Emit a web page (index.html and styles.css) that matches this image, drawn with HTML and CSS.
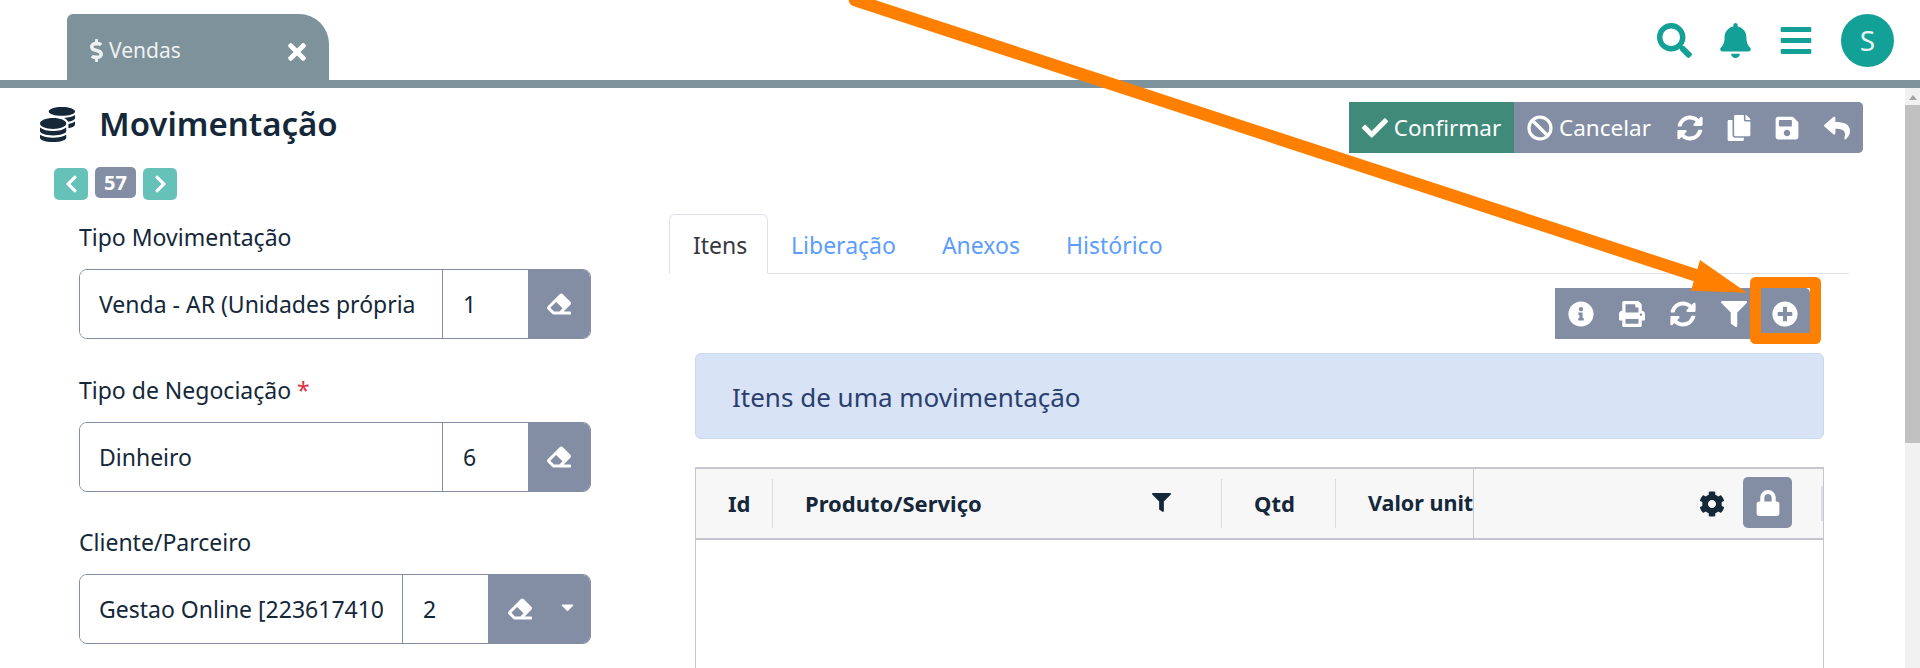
FILE: index.html
```html
<!DOCTYPE html>
<html lang="pt-BR">

<head>
  <meta charset="UTF-8">
  <meta name="viewport" content="width=device-width, initial-scale=1.0">
  <title>Movimentação</title>
  <link rel="stylesheet" href="styles.css">
</head>

<body>
  <svg class="sprite" aria-hidden="true">
    <symbol id="i-search" viewBox="0 0 512 512"><path d="M505 442.7L405.3 343c-4.5-4.5-10.6-7-17-7H372c27.6-35.3 44-79.7 44-128C416 93.1 322.9 0 208 0S0 93.1 0 208s93.1 208 208 208c48.3 0 92.7-16.4 128-44v16.3c0 6.4 2.5 12.5 7 17l99.7 99.7c9.4 9.4 24.6 9.4 33.9 0l28.3-28.3c9.4-9.4 9.4-24.6.1-34zM208 336c-70.7 0-128-57.2-128-128 0-70.7 57.2-128 128-128 70.7 0 128 57.2 128 128 0 70.7-57.2 128-128 128z"/></symbol>
    <symbol id="i-bell" viewBox="0 0 448 512"><path d="M224 512c35.32 0 63.97-28.65 63.97-64H160.03c0 35.35 28.65 64 63.97 64zm215.39-149.71c-19.32-20.76-55.47-51.99-55.47-154.29 0-77.7-54.48-139.9-127.94-155.16V32c0-17.67-14.32-32-31.98-32s-31.98 14.33-31.98 32v20.84C118.56 68.1 64.08 130.3 64.08 208c0 102.3-36.15 133.53-55.47 154.29-6 6.45-8.66 14.16-8.61 21.71.11 16.4 12.98 32 32.1 32h383.8c19.12 0 32-15.6 32.1-32 .05-7.55-2.61-15.27-8.61-21.71z"/></symbol>
    <symbol id="i-bars" viewBox="0 0 448 512"><path d="M16 132h416c8.837 0 16-7.163 16-16V76c0-8.837-7.163-16-16-16H16C7.163 60 0 67.163 0 76v40c0 8.837 7.163 16 16 16zm0 160h416c8.837 0 16-7.163 16-16v-40c0-8.837-7.163-16-16-16H16c-8.837 0-16 7.163-16 16v40c0 8.837 7.163 16 16 16zm0 160h416c8.837 0 16-7.163 16-16v-40c0-8.837-7.163-16-16-16H16c-8.837 0-16 7.163-16 16v40c0 8.837 7.163 16 16 16z"/></symbol>
    <symbol id="i-check" viewBox="0 0 512 512"><path d="M173.898 439.404l-166.4-166.4c-9.997-9.997-9.997-26.206 0-36.204l36.203-36.204c9.997-9.998 26.207-9.998 36.204 0L192 312.69 432.095 72.596c9.997-9.997 26.207-9.997 36.204 0l36.203 36.204c9.997 9.997 9.997 26.206 0 36.204l-294.4 294.401c-9.998 9.997-26.207 9.997-36.204-.001z"/></symbol>
    <symbol id="i-ban" viewBox="0 0 512 512"><path d="M256 8C119.034 8 8 119.033 8 256s111.034 248 248 248 248-111.034 248-248S392.967 8 256 8zm130.108 117.892c65.448 65.448 70 165.481 20.677 235.637L150.47 105.216c70.204-49.356 170.226-44.735 235.638 20.676zM125.892 386.108c-65.448-65.448-70-165.481-20.677-235.637L361.53 406.784c-70.203 49.356-170.226 44.736-235.638-20.676z"/></symbol>
    <symbol id="i-sync" viewBox="0 0 512 512"><path d="M370.72 133.28C339.458 104.008 298.888 87.962 255.848 88c-77.458.068-144.328 53.178-162.791 126.85-1.344 5.363-6.122 9.15-11.651 9.15H24.103c-7.498 0-13.194-6.807-11.807-14.176C33.933 94.924 134.813 8 256 8c66.448 0 126.791 26.136 171.315 68.685L463.03 40.97C478.149 25.851 504 36.559 504 57.941V192c0 13.255-10.745 24-24 24H345.941c-21.382 0-32.09-25.851-16.971-40.971l41.75-41.749zM32 296h134.059c21.382 0 32.09 25.851 16.971 40.971l-41.75 41.75c31.262 29.273 71.835 45.319 114.876 45.28 77.418-.07 144.315-53.144 162.787-126.849 1.344-5.363 6.122-9.15 11.651-9.15h57.304c7.498 0 13.194 6.807 11.807 14.176C478.067 417.076 377.187 504 256 504c-66.448 0-126.791-26.136-171.315-68.685L48.97 471.03C33.851 486.149 8 475.441 8 454.059V320c0-13.255 10.745-24 24-24z"/></symbol>
    <symbol id="i-copy" viewBox="0 0 448 512"><path d="M320 448v40c0 13.255-10.745 24-24 24H24c-13.255 0-24-10.745-24-24V120c0-13.255 10.745-24 24-24h72v296c0 30.879 25.121 56 56 56h168zm0-344V0H152c-13.255 0-24 10.745-24 24v368c0 13.255 10.745 24 24 24h272c13.255 0 24-10.745 24-24V128H344c-13.2 0-24-10.8-24-24zm120.971-31.029L375.029 7.029A24 24 0 0 0 358.059 0H352v96h96v-6.059a24 24 0 0 0-7.029-16.97z"/></symbol>
    <symbol id="i-save" viewBox="0 0 448 512"><path d="M433.941 129.941l-83.882-83.882A48 48 0 0 0 316.118 32H48C21.49 32 0 53.49 0 80v352c0 26.51 21.49 48 48 48h352c26.51 0 48-21.49 48-48V163.882a48 48 0 0 0-14.059-33.941zM224 416c-35.346 0-64-28.654-64-64 0-35.346 28.654-64 64-64s64 28.654 64 64c0 35.346-28.654 64-64 64zm96-304.52V212c0 6.627-5.373 12-12 12H76c-6.627 0-12-5.373-12-12V108c0-6.627 5.373-12 12-12h228.52c3.183 0 6.235 1.264 8.485 3.515l3.48 3.48A11.996 11.996 0 0 1 320 111.48z"/></symbol>
    <symbol id="i-reply" viewBox="0 0 512 512"><path d="M8.309 189.836L184.313 37.851C199.719 24.546 224 35.347 224 56.015v80.053c160.629 1.839 288 34.032 288 186.258 0 61.441-39.581 122.309-83.333 154.132-13.653 9.931-33.111-2.533-28.077-18.631 45.344-145.012-21.507-183.51-176.59-185.742V360c0 20.7-24.3 31.453-39.687 18.164l-176.004-152c-11.071-9.562-11.086-26.753 0-36.328z"/></symbol>
    <symbol id="i-info" viewBox="0 0 512 512"><path d="M256 8C119.043 8 8 119.083 8 256c0 136.997 111.043 248 248 248s248-111.003 248-248C504 119.083 392.957 8 256 8zm0 110c23.196 0 42 18.804 42 42s-18.804 42-42 42-42-18.804-42-42 18.804-42 42-42zm56 254c0 6.627-5.373 12-12 12h-88c-6.627 0-12-5.373-12-12v-24c0-6.627 5.373-12 12-12h12v-64h-12c-6.627 0-12-5.373-12-12v-24c0-6.627 5.373-12 12-12h64c6.627 0 12 5.373 12 12v100h12c6.627 0 12 5.373 12 12v24z"/></symbol>
    <symbol id="i-print" viewBox="0 0 512 512"><path d="M448 192V77.25c0-8.49-3.37-16.62-9.37-22.63L393.37 9.37c-6-6-14.14-9.37-22.63-9.37H96C78.33 0 64 14.33 64 32v160c-35.35 0-64 28.65-64 64v112c0 8.84 7.16 16 16 16h48v96c0 17.67 14.33 32 32 32h320c17.67 0 32-14.33 32-32v-96h48c8.84 0 16-7.16 16-16V256c0-35.35-28.65-64-64-64zm-64 256H128v-96h256v96zm0-224H128V64h192v48c0 8.84 7.16 16 16 16h48v96zm48 72c-13.25 0-24-10.75-24-24 0-13.26 10.75-24 24-24s24 10.74 24 24c0 13.25-10.75 24-24 24z"/></symbol>
    <symbol id="i-filter" viewBox="0 0 512 512"><path d="M487.976 0H24.028C2.71 0-8.047 25.866 7.058 40.971L192 225.941V432c0 7.831 3.821 15.17 10.237 19.662l80 55.98C298.02 518.69 320 507.493 320 487.98V225.941l184.947-184.97C520.021 25.896 509.338 0 487.976 0z"/></symbol>
    <symbol id="i-plus" viewBox="0 0 512 512"><path d="M256 8C119 8 8 119 8 256s111 248 248 248 248-111 248-248S393 8 256 8zm144 276c0 6.6-5.4 12-12 12h-92v92c0 6.6-5.4 12-12 12h-56c-6.6 0-12-5.4-12-12v-92h-92c-6.6 0-12-5.4-12-12v-56c0-6.6 5.4-12 12-12h92v-92c0-6.6 5.4-12 12-12h56c6.6 0 12 5.4 12 12v92h92c6.6 0 12 5.4 12 12v56z"/></symbol>
    <symbol id="i-cog" viewBox="0 0 512 512"><path d="M487.4 315.7l-42.6-24.6c4.3-23.2 4.3-47 0-70.2l42.6-24.6c4.9-2.8 7.1-8.6 5.5-14-11.1-35.6-30-67.8-54.7-94.6-3.8-4.1-10-5.1-14.8-2.3L380.8 110c-17.9-15.4-38.5-27.3-60.8-35.1V25.8c0-5.6-3.9-10.5-9.4-11.7-36.7-8.2-74.3-7.8-109.2 0-5.5 1.2-9.4 6.1-9.4 11.7V75c-22.2 7.9-42.8 19.8-60.8 35.1L88.7 85.5c-4.9-2.8-11-1.9-14.8 2.3-24.7 26.7-43.6 58.9-54.7 94.6-1.7 5.4.6 11.2 5.5 14L67.3 221c-4.3 23.2-4.3 47 0 70.2l-42.6 24.6c-4.9 2.8-7.1 8.6-5.5 14 11.1 35.6 30 67.8 54.7 94.6 3.8 4.1 10 5.1 14.8 2.3l42.6-24.6c17.9 15.4 38.5 27.3 60.8 35.1v49.2c0 5.6 3.9 10.5 9.4 11.7 36.7 8.2 74.3 7.8 109.2 0 5.5-1.2 9.4-6.1 9.4-11.7v-49.2c22.2-7.9 42.8-19.8 60.8-35.1l42.6 24.6c4.9 2.8 11 1.9 14.8-2.3 24.7-26.7 43.6-58.9 54.7-94.6 1.5-5.5-.7-11.3-5.6-14.1zM256 336c-44.1 0-80-35.9-80-80s35.9-80 80-80 80 35.9 80 80-35.9 80-80 80z"/></symbol>
    <symbol id="i-lock" viewBox="0 0 448 512"><path d="M400 224h-24v-72C376 68.2 307.8 0 224 0S72 68.2 72 152v72H48c-26.5 0-48 21.5-48 48v192c0 26.5 21.5 48 48 48h352c26.5 0 48-21.5 48-48V272c0-26.5-21.5-48-48-48zm-104 0H152v-72c0-39.7 32.3-72 72-72s72 32.3 72 72v72z"/></symbol>
    <symbol id="i-eraser" viewBox="0 0 512 512"><path d="M497.941 273.941c18.745-18.745 18.745-49.137 0-67.882l-160-160c-18.745-18.745-49.136-18.746-67.883 0l-256 256c-18.745 18.745-18.745 49.137 0 67.882l96 96A48.004 48.004 0 0 0 144 480h356c6.627 0 12-5.373 12-12v-40c0-6.627-5.373-12-12-12H355.883l142.058-142.059zm-302.627-62.627l137.373 137.373L265.373 416H150.628l-80-80 124.686-124.686z"/></symbol>
    <symbol id="i-times" viewBox="0 0 352 512"><path d="M242.72 256l100.07-100.07c12.28-12.28 12.28-32.19 0-44.48l-22.24-22.24c-12.28-12.28-32.19-12.28-44.48 0L176 189.28 75.93 89.21c-12.28-12.28-32.19-12.28-44.48 0L9.21 111.45c-12.28 12.28-12.28 32.19 0 44.48L109.28 256 9.21 356.07c-12.28 12.28-12.28 32.19 0 44.48l22.24 22.24c12.28 12.28 32.2 12.28 44.48 0L176 322.72l100.07 100.07c12.28 12.28 32.2 12.28 44.48 0l22.24-22.24c12.28-12.28 12.28-32.19 0-44.48L242.72 256z"/></symbol>
    <symbol id="i-dollar" viewBox="0 0 288 512"><path d="M209.2 233.4l-108-31.6C88.7 198.2 80 186.5 80 173.5c0-16.3 13.2-29.5 29.5-29.5h66.3c12.2 0 24.2 3.7 34.2 10.5 6.1 4.1 14.3 3.1 19.5-2l34.8-34c7.1-6.9 6.1-18.4-1.8-24.5C238 74.8 207.4 64.1 176 64V16c0-8.8-7.2-16-16-16h-32c-8.8 0-16 7.2-16 16v48h-2.5C45.8 64-5.4 118.7.5 183.6c4.2 46.1 39.4 83.6 83.8 96.6l102.5 30c12.5 3.7 21.2 15.3 21.2 28.3 0 16.3-13.2 29.5-29.5 29.5h-66.3C100 368 88 364.3 78 357.5c-6.1-4.1-14.3-3.1-19.5 2l-34.8 34c-7.1 6.9-6.1 18.4 1.8 24.5 24.5 19.2 55.1 29.9 86.5 30v48c0 8.8 7.2 16 16 16h32c8.8 0 16-7.2 16-16v-48.2c46.6-.9 90.3-28.6 105.7-72.7 21.5-61.6-14.6-124.8-72.5-141.7z"/></symbol>
    <symbol id="i-coins" viewBox="0 0 512 512"><path d="M0 405.3V448c0 35.3 86 64 192 64s192-28.7 192-64v-42.7C342.7 434.4 267.2 448 192 448S41.3 434.4 0 405.3zM320 128c106 0 192-28.7 192-64S426 0 320 0 128 28.7 128 64s86 64 192 64zM0 300.4V352c0 35.3 86 64 192 64s192-28.7 192-64v-51.6c-41.3 34-116.9 51.6-192 51.6S41.3 334.4 0 300.4zm416 11c57.3-11.1 96-31.7 96-55.4v-42.7c-23.2 16.4-57.3 27.6-96 34.5v63.6zM192 160C86 160 0 195.8 0 240s86 80 192 80 192-35.8 192-80-86-80-192-80zm219.3 56.3c60-10.8 100.7-32 100.7-56.3v-42.7c-35.5 25.1-96.5 38.6-160.7 41.8 29.5 14.3 51.2 33.5 60 57.2z"/></symbol>
    <symbol id="i-left" viewBox="0 0 320 512"><path d="M34.52 239.03L228.87 44.69c9.37-9.37 24.57-9.37 33.94 0l22.67 22.67c9.36 9.36 9.37 24.52.04 33.9L131.49 256l154.02 154.75c9.34 9.38 9.32 24.54-.04 33.9l-22.67 22.67c-9.37 9.37-24.57 9.37-33.94 0L34.52 272.97c-9.37-9.37-9.37-24.57 0-33.94z"/></symbol>
    <symbol id="i-right" viewBox="0 0 320 512"><path d="M285.476 272.971L91.132 467.314c-9.373 9.373-24.569 9.373-33.941 0l-22.667-22.667c-9.357-9.357-9.375-24.522-.04-33.901L188.505 256 34.484 101.255c-9.335-9.379-9.317-24.544.04-33.901l22.667-22.667c9.373-9.373 24.569-9.373 33.941 0L285.475 239.03c9.373 9.372 9.373 24.568.001 33.941z"/></symbol>
    <symbol id="i-caret" viewBox="0 0 320 512"><path d="M31.3 192h257.3c17.8 0 26.7 21.5 14.1 34.1L174.1 354.8c-7.8 7.8-20.5 7.8-28.3 0L17.2 226.1C4.6 213.5 13.5 192 31.3 192z"/></symbol>
  </svg>

  <header class="topbar">
    <div class="app-tab">
      <svg class="tab-dollar"><use href="#i-dollar"/></svg>
      <span class="tab-name">Vendas</span>
      <svg class="tab-close"><use href="#i-times"/></svg>
    </div>
    <div class="top-actions">
      <svg class="top-icon"><use href="#i-search"/></svg>
      <svg class="top-icon top-icon-bell"><use href="#i-bell"/></svg>
      <svg class="top-icon top-icon-bars"><use href="#i-bars"/></svg>
      <div class="avatar">S</div>
    </div>
  </header>

  <div class="page">
    <main class="content">
      <div class="title-row">
        <h1 class="page-title">
          <svg class="title-icon"><use href="#i-coins"/></svg>
          Movimentação
        </h1>
        <div class="toolbar">
          <button class="tool-btn tool-confirm"><svg class="tool-icon"><use href="#i-check"/></svg>Confirmar</button>
          <button class="tool-btn tool-text"><svg class="tool-icon"><use href="#i-ban"/></svg>Cancelar</button>
          <button class="tool-btn"><svg class="tool-icon"><use href="#i-sync"/></svg></button>
          <button class="tool-btn tool-narrow"><svg class="tool-icon"><use href="#i-copy"/></svg></button>
          <button class="tool-btn tool-narrow"><svg class="tool-icon"><use href="#i-save"/></svg></button>
          <button class="tool-btn tool-last"><svg class="tool-icon"><use href="#i-reply"/></svg></button>
        </div>
      </div>

      <div class="pager">
        <button class="pager-btn"><svg class="pager-icon"><use href="#i-left"/></svg></button>
        <span class="pager-count">57</span>
        <button class="pager-btn"><svg class="pager-icon"><use href="#i-right"/></svg></button>
      </div>

      <div class="columns">
        <form class="form-col">
          <div class="field">
            <label class="field-label">Tipo Movimentação</label>
            <div class="input-group">
              <input class="input-text" type="text" value="Venda - AR (Unidades própria">
              <input class="input-code" type="text" value="1">
              <span class="input-btn"><svg class="erase-icon"><use href="#i-eraser"/></svg></span>
            </div>
          </div>
          <div class="field">
            <label class="field-label">Tipo de Negociação <span class="required">*</span></label>
            <div class="input-group">
              <input class="input-text" type="text" value="Dinheiro">
              <input class="input-code" type="text" value="6">
              <span class="input-btn"><svg class="erase-icon"><use href="#i-eraser"/></svg></span>
            </div>
          </div>
          <div class="field">
            <label class="field-label">Cliente/Parceiro</label>
            <div class="input-group">
              <input class="input-text" type="text" value="Gestao Online [223617410">
              <input class="input-code" type="text" value="2">
              <span class="input-btn input-btn-wide">
                <svg class="erase-icon"><use href="#i-eraser"/></svg>
                <svg class="caret-icon"><use href="#i-caret"/></svg>
              </span>
            </div>
          </div>
        </form>

        <section class="detail-col">
          <nav class="tabs">
            <a class="tab tab-active">Itens</a>
            <a class="tab">Liberação</a>
            <a class="tab">Anexos</a>
            <a class="tab">Histórico</a>
          </nav>

          <div class="tab-body">
            <div class="item-tools">
              <button class="item-btn"><svg class="tool-icon"><use href="#i-info"/></svg></button>
              <button class="item-btn"><svg class="tool-icon"><use href="#i-print"/></svg></button>
              <button class="item-btn"><svg class="tool-icon"><use href="#i-sync"/></svg></button>
              <button class="item-btn"><svg class="tool-icon"><use href="#i-filter"/></svg></button>
              <button class="item-btn"><svg class="tool-icon"><use href="#i-plus"/></svg></button>
            </div>

            <div class="alert">Itens de uma movimentação</div>

            <div class="grid">
              <div class="grid-head">
                <div class="grid-cols">
                  <div class="grid-cell cell-id">Id</div>
                  <div class="grid-cell cell-product">Produto/Serviço<svg class="head-filter"><use href="#i-filter"/></svg></div>
                  <div class="grid-cell cell-qty">Qtd</div>
                  <div class="grid-cell cell-value">Valor unit</div>
                </div>
                <div class="grid-fixed">
                  <svg class="head-cog"><use href="#i-cog"/></svg>
                  <button class="lock-btn"><svg class="lock-icon"><use href="#i-lock"/></svg></button>
                  <span class="fixed-edge"></span>
                </div>
              </div>
            </div>
          </div>
        </section>
      </div>
    </main>

    <div class="scrollbar">
      <span class="scroll-arrow"></span>
      <span class="scroll-thumb"></span>
    </div>
  </div>

  <!-- seta e moldura laranja da anotacao -->
  <svg class="annotation" viewBox="0 0 1920 668">
    <line class="note-line" x1="855" y1="0" x2="1695" y2="275"/>
    <polygon class="note-head" points="1700,260 1747,292.7 1691,290.7"/>
    <rect class="note-frame" x="1755.5" y="282.5" width="60" height="56"/>
  </svg>
</body>

</html>
```

FILE: styles.css
```css
* {
  box-sizing: border-box;
}

body {
  margin: 0;
  height: 100vh;
  display: flex;
  flex-direction: column;
  overflow: hidden;
  background-color: #ffffff;
  color: #14283a;
  font-family: "Noto Sans", "Open Sans", sans-serif;
  font-size: 23px;
}

button {
  border: none;
  padding: 0;
  font: inherit;
  color: #ffffff;
  cursor: pointer;
}

svg {
  fill: currentColor;
}

.sprite {
  display: none;
}

/* top bar */
.topbar {
  height: 88px;
  flex-shrink: 0;
  display: flex;
  justify-content: space-between;
  border-bottom: 8px solid #7e929c;
}

.app-tab {
  width: 262px;
  height: 66px;
  margin: 14px 0 0 67px;
  padding: 6px 0 0 23px;
  display: flex;
  align-items: center;
  border-radius: 6px 30px 0 0;
  background-color: #7e929c;
  color: #eef1f2;
  font-size: 21px;
}

.tab-dollar {
  width: 13px;
  height: 23px;
}

.tab-name {
  width: 179px;
  margin-left: 6px;
}

.tab-close {
  width: 18px;
  height: 26px;
  margin-top: 4px;
  color: #ffffff;
}

.top-actions {
  display: flex;
  align-items: center;
  height: 80px;
  padding-right: 26px;
  color: #13a096;
}

.top-icon {
  width: 35px;
  height: 35px;
  margin-right: 28px;
}

.top-icon-bell {
  width: 31px;
  margin-right: 29px;
}

.top-icon-bars {
  width: 32px;
  margin-right: 29px;
}

.avatar {
  width: 53px;
  height: 53px;
  border-radius: 50%;
  display: flex;
  align-items: center;
  justify-content: center;
  background-color: #13a096;
  color: #e4f3f2;
  font-size: 28px;
}

/* page */
.page {
  flex: 1;
  min-height: 0;
  display: flex;
}

.content {
  flex: 1;
  min-width: 0;
  overflow: hidden;
}

.scrollbar {
  width: 15px;
  flex-shrink: 0;
  display: flex;
  flex-direction: column;
  align-items: center;
  background-color: #f1f1f1;
}

.scroll-arrow {
  margin-top: 7px;
  border-left: 4px solid transparent;
  border-right: 4px solid transparent;
  border-bottom: 5px solid #a3a3a3;
}

.scroll-thumb {
  width: 100%;
  height: 338px;
  margin-top: 5px;
  background-color: #c1c1c1;
}

.title-row {
  display: flex;
  justify-content: space-between;
  align-items: flex-start;
  padding: 14px 42px 0 40px;
}

.page-title {
  margin: 0;
  display: flex;
  align-items: center;
  height: 35px;
  margin-top: 4px;
  font-size: 33px;
  font-weight: 600;
  line-height: 35px;
}

.title-icon {
  width: 35px;
  height: 35px;
  margin: 1px 24px 0 0;
}

.toolbar {
  display: flex;
  height: 51px;
  border-radius: 0 5px 5px 0;
  overflow: hidden;
  background-color: #838ea5;
}

.tool-btn {
  height: 51px;
  width: 51px;
  display: flex;
  align-items: center;
  justify-content: center;
  gap: 6px;
  background-color: #838ea5;
  font-size: 22.5px;
}

.tool-confirm {
  width: 165px;
  background-color: #3f8a78;
}

.tool-text {
  width: 150px;
}

.tool-narrow {
  width: 48px;
}

.tool-last {
  width: 52px;
}

.tool-icon {
  width: 26px;
  height: 26px;
}

.pager {
  display: flex;
  align-items: flex-start;
  gap: 7px;
  margin: 14px 0 0 54px;
}

.pager-btn {
  width: 34px;
  height: 32px;
  margin-top: 1px;
  display: flex;
  align-items: center;
  justify-content: center;
  border-radius: 5px;
  background-color: #66c2b9;
}

.pager-icon {
  width: 13px;
  height: 20px;
}

.pager-count {
  width: 41px;
  height: 31px;
  display: flex;
  align-items: center;
  justify-content: center;
  border-radius: 5px;
  background-color: #838ea5;
  color: #ffffff;
  font-size: 20px;
  font-weight: 700;
}

/* columns */
.columns {
  display: flex;
  align-items: flex-start;
  margin-top: 14px;
  padding: 0 56px 0 79px;
}

.form-col {
  width: 512px;
  flex-shrink: 0;
  padding-top: 8px;
}

.field {
  margin-bottom: 35.5px;
}

.field-label {
  display: block;
  height: 30px;
  margin-bottom: 17px;
  line-height: 30px;
}

.required {
  color: #dc3545;
}

.input-group {
  display: flex;
  height: 70px;
  border: 1px solid #838ea5;
  border-radius: 8px;
  overflow: hidden;
}

.input-group input {
  height: 100%;
  min-width: 0;
  border: none;
  outline: none;
  font: inherit;
  color: inherit;
  background-color: #ffffff;
}

.input-text {
  flex: 1;
  padding: 0 19px;
}

.input-code {
  width: 86px;
  flex-shrink: 0;
  padding: 0 20px;
  border-left: 1px solid #838ea5 !important;
}

.input-btn {
  width: 62px;
  flex-shrink: 0;
  display: flex;
  align-items: center;
  justify-content: center;
  background-color: #838ea5;
  color: #ffffff;
}

.input-btn-wide {
  width: 102px;
  justify-content: flex-start;
  padding-left: 20px;
}

.erase-icon {
  width: 24px;
  height: 24px;
}

.caret-icon {
  width: 13px;
  height: 20px;
  margin-left: 29px;
  margin-top: -4px;
}

.detail-col {
  flex: 1;
  min-width: 0;
  margin-left: 78px;
}

.tabs {
  display: flex;
  height: 60px;
  border-bottom: 1px solid #dee2e6;
}

.tab {
  height: 60px;
  padding: 0 22px;
  line-height: 60px;
  color: #5c9dff;
  border: 1px solid transparent;
  border-radius: 6px 6px 0 0;
}

.tab-active {
  width: 99px;
  padding: 0 0 0 23px;
  color: #343a40;
  background-color: #ffffff;
  border-color: #dee2e6 #dee2e6 #ffffff;
}

.tab-body {
  padding: 14px 25px 0 26px;
}

.item-tools {
  display: flex;
  justify-content: flex-end;
  padding-right: 14px;
}

.item-btn {
  width: 51px;
  height: 51px;
  display: flex;
  align-items: center;
  justify-content: center;
  background-color: #838ea5;
}

.item-btn:last-child {
  border-radius: 0 5px 5px 0;
}

.alert {
  height: 86px;
  margin-top: 14px;
  padding: 2px 0 0 36px;
  display: flex;
  align-items: center;
  border: 1px solid #c9d8f2;
  border-radius: 6px;
  background-color: #d8e3f5;
  color: #2a3f6f;
  font-size: 26px;
}

/* items grid */
.grid {
  height: 300px;
  margin-top: 28px;
  border: 1px solid #c5c6ce;
  border-top-width: 2px;
}

.grid-head {
  display: flex;
  height: 71px;
  border-bottom: 2px solid #c5c6ce;
  background-color: #f7f7f8;
  font-size: 22px;
  font-weight: 700;
}

.grid-cols {
  width: 777px;
  flex-shrink: 0;
  display: flex;
  align-items: center;
  overflow: hidden;
}

.grid-cell {
  height: 49px;
  flex-shrink: 0;
  display: flex;
  align-items: center;
  white-space: nowrap;
  padding-bottom: 2px;
  border-right: 1px solid #dcdde1;
}

.cell-id {
  width: 77px;
  padding-left: 32px;
}

.cell-product {
  width: 449px;
  padding-left: 32px;
  justify-content: space-between;
  padding-right: 50px;
}

.cell-qty {
  width: 114px;
  padding-left: 32px;
}

.cell-value {
  width: 137px;
  padding-left: 32px;
  border-right: none;
  font-size: 21.5px;
}

.head-filter {
  width: 19px;
  height: 19px;
}

.grid-fixed {
  flex: 1;
  display: flex;
  align-items: center;
  justify-content: flex-end;
  border-left: 1px solid #c5c6ce;
}

.head-cog {
  width: 26px;
  height: 26px;
  margin-right: 18px;
}

.lock-btn {
  width: 49px;
  height: 51px;
  margin: -2px 29px 0 0;
  display: flex;
  align-items: center;
  justify-content: center;
  border-radius: 5px;
  background-color: #838ea5;
}

.lock-icon {
  width: 24px;
  height: 26px;
}

.fixed-edge {
  width: 2px;
  height: 35px;
  background-color: #dcdde1;
}

/* annotation */
.annotation {
  position: absolute;
  top: 0;
  left: 0;
  width: 1920px;
  height: 668px;
  pointer-events: none;
}

.note-line {
  stroke: #ff8000;
  stroke-width: 12.5;
  stroke-linecap: round;
}

.note-head {
  fill: #ff8000;
}

.note-frame {
  fill: none;
  stroke: #ff8000;
  stroke-width: 11;
  stroke-linejoin: round;
}
```
